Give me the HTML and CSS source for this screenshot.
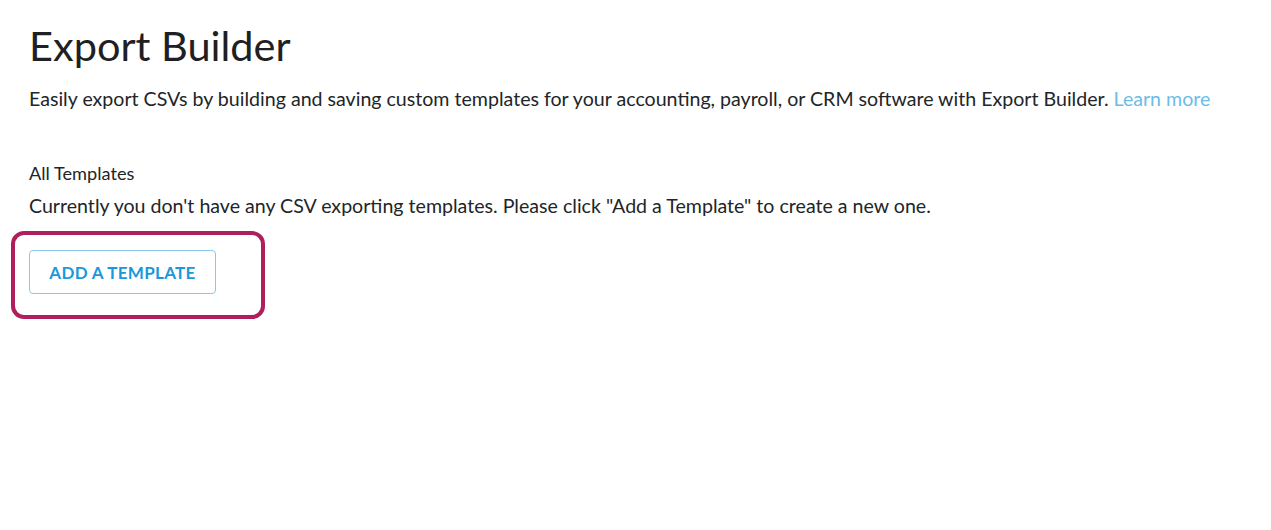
FILE: index.html
```html
<!DOCTYPE html>
<html>
<head>
<meta charset="utf-8">
<link rel="stylesheet" href="styles.css">
</head>
<body>
<main class="page">
  <h1 class="title">Export Builder</h1>
  <p class="intro">Easily export CSVs by building and saving custom templates for your accounting, payroll, or CRM software with Export Builder. <a class="link" href="#">Learn more</a></p>
  <section class="templates">
    <div class="section-label">All Templates</div>
    <p class="empty">Currently you don't have any CSV exporting templates. Please click "Add a Template" to create a new one.</p>
    <div class="highlight">
      <button class="btn">ADD A TEMPLATE</button>
    </div>
  </section>
</main>
</body>
</html>
```

FILE: styles.css
```css
html, body {
  margin: 0;
  padding: 0;
  background: #fff;
}
body {
  font-family: Lato, "Open Sans", sans-serif;
  color: #222528;
}
.page {
  padding: 20px 30px 0 29px;
}
.title {
  margin: 0;
  font-size: 41.5px;
  font-weight: 400;
  line-height: 50px;
  color: #1e2023;
}
.intro {
  margin: 17px 0 0;
  font-size: 19.6px;
  line-height: 24px;
}
.link {
  color: #6cbcea;
  text-decoration: none;
}
.templates {
  margin-top: 52px;
}
.section-label {
  font-size: 18.2px;
  line-height: 20px;
}
.empty {
  margin: 11px 0 0;
  font-size: 19.6px;
  line-height: 24px;
}
.highlight {
  box-sizing: border-box;
  width: 254px;
  margin: 13px 0 0 -18px;
  padding: 15px 45px 21px 14px;
  border: 4px solid #b01f5b;
  border-radius: 13px;
}
.btn {
  display: block;
  box-sizing: border-box;
  width: 187px;
  height: 44px;
  padding: 0;
  background: #fff;
  border: 1px solid #89c8ea;
  border-radius: 4px;
  font-family: Lato, sans-serif;
  font-weight: 700;
  font-size: 17px;
  letter-spacing: 0.3px;
  color: #1a98db;
}
```
